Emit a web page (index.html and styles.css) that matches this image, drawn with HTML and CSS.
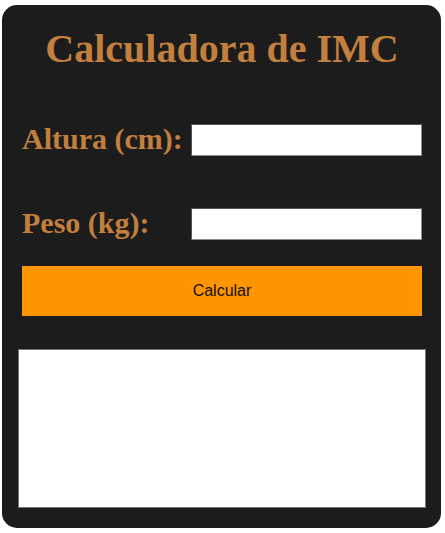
FILE: index.html
```html
<!DOCTYPE html>
<html lang="pt">
<head>
<meta charset="utf-8">
<title>Calculadora de IMC</title>
<link rel="stylesheet" href="styles.css">
</head>
<body>
<div class="card">
  <h1 class="title">Calculadora de IMC</h1>
  <div class="form">
    <label class="label" for="altura">Altura (cm):</label>
    <input class="field" id="altura" type="text">
    <label class="label" for="peso">Peso (kg):</label>
    <input class="field" id="peso" type="text">
  </div>
  <button class="btn" type="button">Calcular</button>
  <div class="result"></div>
</div>
</body>
</html>
```
FILE: styles.css
```css
html, body {
  margin: 0;
  padding: 0;
  background: #ffffff;
}
body {
  padding: 5px 0 0 2px;
}
.card {
  width: 439px;
  height: 523px;
  box-sizing: border-box;
  background: #1c1c1c;
  border-radius: 15px;
  padding: 22px 19px 20px 20px;
  display: flex;
  flex-direction: column;
}
.title {
  margin: 0;
  font-family: "Liberation Serif", serif;
  font-weight: bold;
  font-size: 40px;
  line-height: 44px;
  text-align: center;
  color: #c27f3d;
}
.form {
  margin-top: 52px;
  display: grid;
  grid-template-columns: auto 1fr;
  column-gap: 8px;
  row-gap: 51px;
  align-items: center;
}
.label {
  font-family: "Liberation Serif", serif;
  font-weight: bold;
  font-size: 30px;
  line-height: 31px;
  padding-bottom: 2px;
  color: #c27f3d;
}
.field {
  height: 32px;
  box-sizing: border-box;
  margin: 0;
  width: 100%;
  background: #ffffff;
  border-style: solid;
  border-width: 1px;
  border-color: #555555 #8e8e8e #8e8e8e #555555;
  padding: 1px 2px;
  font-family: "Liberation Sans", sans-serif;
  font-size: 13px;
}
.btn {
  margin-top: 26px;
  height: 50px;
  width: 100%;
  border: none;
  background: #ff9500;
  color: #111111;
  font-family: "Liberation Sans", sans-serif;
  font-size: 16px;
  padding: 0;
}
.result {
  margin: 33px -4px 0 -4px;
  height: 159px;
  box-sizing: border-box;
  background: #ffffff;
  border: 1px solid #767676;
}
```
